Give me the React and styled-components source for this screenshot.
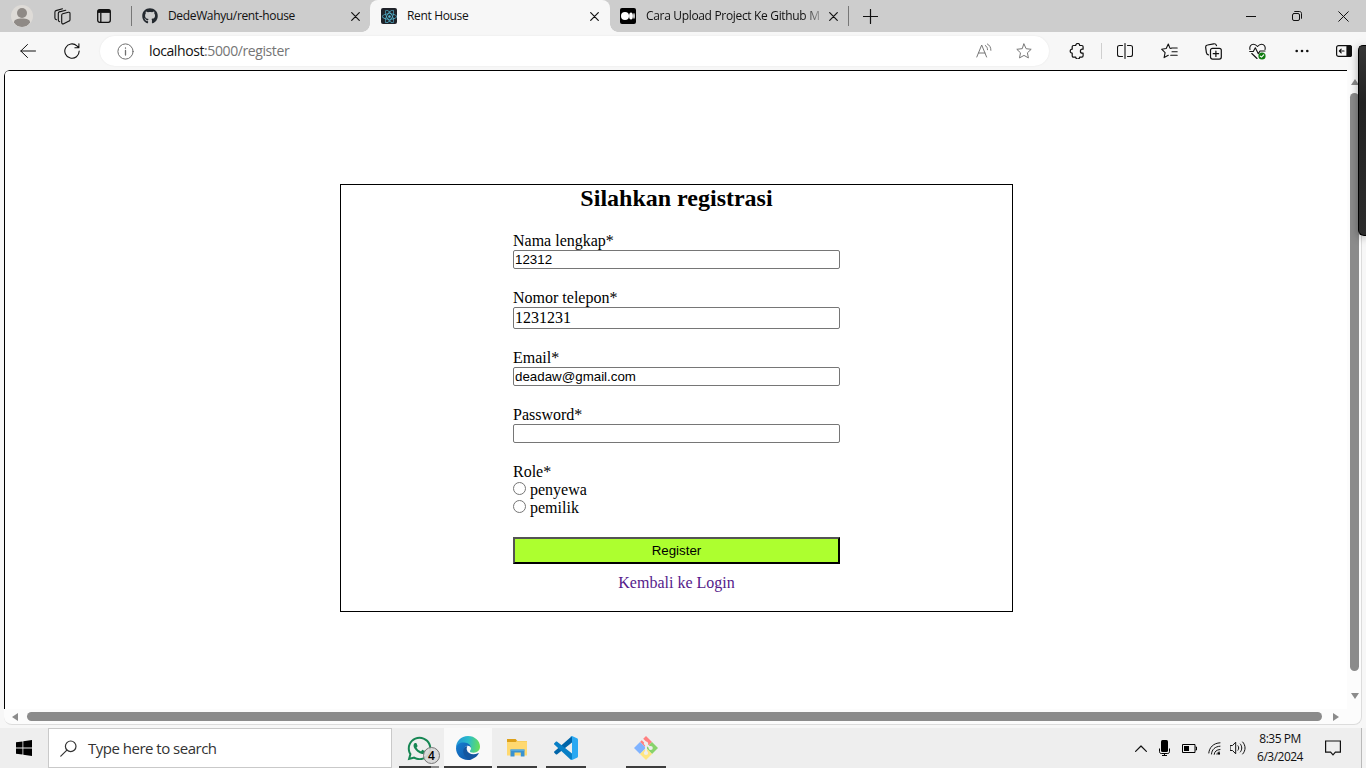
import React from "react";
import styled, { createGlobalStyle, css } from "styled-components";
import { FaGithub, FaReact, FaWhatsapp } from "react-icons/fa";

const GlobalStyle = createGlobalStyle`
  *, *::before, *::after { box-sizing: border-box; }
  html, body { margin: 0; padding: 0; overflow: hidden; }
  svg { display: block; flex: none; }
`;

const ui = `"Open Sans", "Noto Sans", sans-serif`;

const Desktop = styled.div`
  position: relative;
  display: flex;
  flex-direction: column;
  width: 1366px;
  height: 768px;
  overflow: hidden;
  background: #f7f7f7;
  font-family: ${ui};
  color: #111;
`;

/* Tab strip */
const TabStrip = styled.header`
  display: flex;
  align-items: center;
  height: 32px;
  background: #cdcdcd;
`;

const Cell = styled.div`
  display: flex;
  align-items: center;
  justify-content: center;
  flex: none;
  width: ${(p) => p.$w}px;
  height: 100%;
  color: ${(p) => p.$color || "#111"};
`;

const Avatar = styled.div`
  width: 22px;
  height: 22px;
  border-radius: 50%;
  overflow: hidden;
  background: #dedbd7;
`;

const Rule = styled.span`
  flex: none;
  width: 1px;
  height: ${(p) => p.$h}px;
  background: ${(p) => p.$color};
`;

const Tab = styled.div`
  position: relative;
  display: flex;
  align-items: center;
  flex: none;
  width: ${(p) => p.$w}px;
  height: 32px;
  padding: 0 ${(p) => p.$end}px 0 ${(p) => p.$start}px;
  ${(p) =>
    p.$active &&
    css`
      background: #f7f7f7;
      border-radius: 8px 8px 0 0;
      &::before,
      &::after {
        content: "";
        position: absolute;
        bottom: 0;
        width: 8px;
        height: 8px;
      }
      &::before {
        left: -8px;
        background: radial-gradient(circle at 0 0, transparent 7.5px, #f7f7f7 8px);
      }
      &::after {
        right: -8px;
        background: radial-gradient(circle at 100% 0, transparent 7.5px, #f7f7f7 8px);
      }
    `}
`;

const Favicon = styled.span`
  display: flex;
  align-items: center;
  justify-content: center;
  flex: none;
  width: 16px;
  height: 16px;
  border-radius: 2px;
  background: ${(p) => p.$bg || "transparent"};
  color: ${(p) => p.$color || "#24292f"};
`;

const TabTitle = styled.span`
  flex: 1;
  min-width: 0;
  margin: 0 8px 0 10px;
  white-space: nowrap;
  font-size: 12px;
  line-height: 16px;
  letter-spacing: ${(p) => p.$track || 0}px;
  ${(p) =>
    p.$fade &&
    css`
      mask-image: linear-gradient(90deg, #000 158px, transparent 180px);
    `}
`;

const WindowButtons = styled.div`
  display: flex;
  height: 100%;
  margin-left: auto;
`;

/* Toolbar */
const Toolbar = styled.div`
  display: flex;
  align-items: center;
  height: 38px;
  padding-left: 6px;
  background: #f7f7f7;
`;

const AddressBar = styled.div`
  display: flex;
  align-items: center;
  width: 949px;
  height: 30px;
  margin: 0 6px;
  padding: 0 6px 0 17px;
  border-radius: 15px;
  background: #fff;
  box-shadow: 0 0 2px rgba(0, 0, 0, 0.08);
`;

const Address = styled.span`
  flex: 1;
  margin-left: 15px;
  color: #757575;
  font-size: 14px;
  line-height: 20px;
  letter-spacing: -0.4px;
  b { font-weight: 400; color: #111; }
`;

/* Page frame */
const Frame = styled.div`
  display: grid;
  grid-template-columns: 1343px 14px;
  grid-template-rows: 639px 15px;
  width: 1358px;
  height: 655px;
  margin: 0 4px 3px;
  border: solid #dcdcdc;
  border-width: 0 1px 1px 0;
  border-radius: 6px 0 8px 8px;
  background: #fcfcfc;
  overflow: hidden;
`;

const Viewport = styled.main`
  padding: 113px 0 0 335px;
  border: solid #000;
  border-width: 1px 0 0 1px;
  border-radius: 5px 0 0 0;
  background: #fff;
  font-family: "Liberation Serif", serif;
  font-size: 16px;
  color: #000;
`;

const Scroll = styled.div`
  display: flex;
  flex-direction: ${(p) => (p.$vertical ? "column" : "row")};
  align-items: center;
  justify-content: flex-start;
  padding: ${(p) => (p.$vertical ? "9px 0 0 1px" : "0 0 0 8px")};
  gap: ${(p) => (p.$vertical ? "8px" : "9px")};
`;

const Thumb = styled.div`
  flex: none;
  width: ${(p) => p.$w}px;
  height: ${(p) => p.$h}px;
  border-radius: 5px;
  background: #8b8b8b;
`;

const Arrow = styled.span`
  flex: none;
  width: 0;
  height: 0;
  border: solid transparent;
  ${(p) => p.$dir === "up" && "border-width: 0 4.5px 6px; border-bottom-color: #8b8b8b;"}
  ${(p) => p.$dir === "down" && "border-width: 6px 4.5px 0; border-top-color: #8b8b8b; margin-top: 14px;"}
  ${(p) => p.$dir === "left" && "border-width: 4.5px 6px 4.5px 0; border-right-color: #8b8b8b;"}
  ${(p) => p.$dir === "right" && "border-width: 4.5px 0 4.5px 6px; border-left-color: #8b8b8b; margin-left: 2px;"}
`;

/* Registration form */
const Card = styled.section`
  display: flex;
  flex-direction: column;
  align-items: center;
  width: 673px;
  height: 428px;
  border: 1px solid #000;
`;

const Title = styled.h2`
  margin: 0 0 20px;
  font-size: 24px;
  font-weight: 700;
  line-height: 27px;
`;

const Form = styled.form`
  display: flex;
  flex-direction: column;
  gap: 20px;
  width: 327px;
`;

const Field = styled.div`
  display: flex;
  flex-direction: column;
  line-height: 18px;
`;

const TextInput = styled.input`
  width: 100%;
  height: ${(p) => (p.$serif ? 22 : 19)}px;
  padding: 0 1px;
  border: 1px solid #767676;
  border-radius: 2px;
  outline: none;
  background: #fff;
  color: #000;
  font: ${(p) => (p.$serif ? '16px "Liberation Serif", serif' : '13.333px "Liberation Sans", sans-serif')};
`;

const Choice = styled.label`
  display: flex;
  align-items: flex-start;
  gap: 4px;
  height: 18px;
`;

const Radio = styled.input`
  appearance: none;
  width: 13px;
  height: 13px;
  margin: 1px 0 0;
  border: 1px solid #767676;
  border-radius: 50%;
  background: #fff;
`;

const Submit = styled.button`
  height: 27px;
  padding: 0;
  border: 2px outset #000;
  border-radius: 0;
  background: #adff2f;
  color: #000;
  font: 13.333px "Liberation Sans", sans-serif;
`;

const LoginLink = styled.a`
  margin-top: 10px;
  color: #551a8b;
  line-height: 18px;
`;

/* Taskbar */
const Taskbar = styled.footer`
  display: flex;
  height: 40px;
  background: #eeeeee;
`;

const Search = styled.div`
  display: flex;
  align-items: center;
  width: 344px;
  height: 40px;
  margin-right: 3px;
  padding-left: 11px;
  border: 1px solid #c9c9c9;
  background: #fff;
  color: #333;
  font-size: 15px;
  letter-spacing: -0.5px;
  span { margin-left: 11px; }
`;

const TaskButton = styled.div`
  display: flex;
  align-items: center;
  justify-content: center;
  position: relative;
  flex: none;
  width: 48px;
  height: 40px;
  margin-left: ${(p) => p.$gap ?? 1}px;
  background: ${(p) => (p.$active ? "#f9f9f9" : "transparent")};
  &::after {
    content: "";
    position: absolute;
    bottom: 0;
    left: ${(p) => (p.$active ? 0 : 4)}px;
    right: ${(p) => (p.$active ? 0 : 4)}px;
    height: 2px;
    background: ${(p) => (p.$stacked ? "linear-gradient(90deg, #3d3d3d 80%, #8a8a8a 80%)" : "#3d3d3d")};
  }
`;

const Badge = styled.span`
  position: absolute;
  left: 28px;
  top: 19px;
  display: flex;
  align-items: center;
  justify-content: center;
  width: 17px;
  height: 17px;
  border: 1px solid #777;
  border-radius: 50%;
  background: rgba(216, 216, 216, 0.93);
  color: #000;
  font: 600 12px/15px ${ui};
`;

const Tray = styled.div`
  display: flex;
  align-items: center;
  height: 40px;
  margin-left: auto;
`;

const Clock = styled.div`
  width: 62px;
  text-align: center;
  font-size: 12px;
  line-height: 18px;
  letter-spacing: -0.5px;
  white-space: nowrap;
`;

const ShowDesktop = styled.div`
  width: 5px;
  height: 40px;
  border-left: 1px solid #b9b9b9;
  background: #f3f3f3;
`;

const DarkWindow = styled.div`
  position: absolute;
  top: 45px;
  right: 0;
  width: 8px;
  height: 191px;
  border: solid #000;
  border-width: 1px 0 1px 1px;
  border-radius: 5px 0 0 6px;
  background: linear-gradient(#363636, #222 30%, #2c2c2c);
  box-shadow: 0 2px 9px rgba(0, 0, 0, 0.35);
`;

const Line = ({ w = 16, h = w, sw = 1, box, children, ...rest }) => (
  <svg
    width={w}
    height={h}
    viewBox={box || `0 0 ${w} ${h}`}
    fill="none"
    stroke="currentColor"
    strokeWidth={sw}
    strokeLinecap="round"
    strokeLinejoin="round"
    {...rest}
  >
    {children}
  </svg>
);

const CloseIcon = ({ size = 9, sw = 1.2 }) => (
  <Line w={size} sw={sw}>
    <path d={`M.7 .7L${size - 0.7} ${size - 0.7}M${size - 0.7} .7L.7 ${size - 0.7}`} />
  </Line>
);

const starPath = "M8 1l2.1 4.7 5.1.6-3.8 3.5 1 5.1L8 12.4l-4.5 2.5 1-5.1L.8 6.3l5.1-.6z";

const EdgeLogo = () => (
  <svg width="24" height="24" viewBox="0 0 24 24">
    <defs>
      <linearGradient id="edgeTop" x1="0" y1=".4" x2="1" y2=".5">
        <stop offset="0" stopColor="#2394d8" />
        <stop offset=".5" stopColor="#2bbdca" />
        <stop offset="1" stopColor="#67df58" />
      </linearGradient>
      <linearGradient id="edgeSide" x1="0" y1="0" x2="1" y2="1">
        <stop offset="0" stopColor="#167fd2" />
        <stop offset="1" stopColor="#1051a1" />
      </linearGradient>
    </defs>
    <path d="M0 12C0 5 5 0 12 0s12 5 12 10.6c0 4-3 6.1-6.3 6.1-3 0-4.2-1-3.7-2 .9-1 1.2-2 .9-3C14 8.8 10.500 8 7.800 8 4 8 1 9.500 0 12z" fill="url(#edgeTop)" />
    <path d="M0 12c.8-4 4.200-5.800 8-5.600 4.300.2 6.800 2.700 7 5.300-.7-1.500-2-2.200-3.600-2-2.800.5-3.700 3.400-2.700 6.300 1.200 3.600 4.200 5.800 8 6.700C14.500 24 13.500 24 12 24 5 24 0 19 0 12z" fill="url(#edgeSide)" />
    <path d="M9.200 10.700C6.500 13 6.700 18.200 9.800 21c2.100 1.900 4.700 2.200 6.900 1.700 2.600-1 4.700-2.700 5.900-4.900.3-.6-.1-.9-.6-.6-4.600 2.400-10.200.8-11.200-3.400-.3-1.200 0-2.500.7-3.500-.8 0-1.600 0-2.300.4z" fill="#14569f" />
  </svg>
);

const FolderLogo = () => (
  <svg width="22" height="20" viewBox="0 0 22 20">
    <path d="M1 1h8.500l2 2H21v14H1z" fill="#f8cf60" />
    <path d="M1 1h8.500l1.300 1.500-1 1.500H1z" fill="#dda019" />
    <path d="M1 4h20v13.500H1z" fill="#ffd970" />
    <path d="M4.500 18.500v-7h14v7h-3.700v-4H8.500v4z" fill="#3992d0" />
    <path d="M4.500 11.500h14v1.300h-14z" fill="#5bb0e5" />
  </svg>
);

const CodeLogo = () => (
  <svg width="24" height="24" viewBox="0 0 24 24">
    <path d="M18 0v6.400L3.200 18.200c-.5.4-1 .3-1.400 0L.3 16.800c-.4-.4-.4-1 0-1.400z" fill="#0065a9" />
    <path d="M18 24v-6.400L3.200 5.800c-.5-.4-1-.3-1.400 0L.3 7.200c-.4.4-.4 1 0 1.400L16.500 23.500z" fill="#087fc6" />
    <path d="M18 0l5 2.300c.6.3 1 .8 1 1.500v16.400c0 .7-.4 1.200-1 1.500L18 24c-.8.2-1.500-.2-2-.7.800.5 2 .2 2-1V1.700c0-1.200-1.200-1.500-2-1 .5-.5 1.200-.9 2-.7z" fill="#2aa8f2" />
  </svg>
);

const GitLogo = () => (
  <svg width="24" height="24" viewBox="0 0 24 24">
    <path d="M12 0l6 6-6 6-6-6z" fill="#ff8080" />
    <path d="M18 6l6 6-6 6-6-6z" fill="#88d36b" />
    <path d="M6 6l6 6-6 6-6-6z" fill="#80b3ff" />
    <path d="M12 12l6 6-6 6-6-6z" fill="#ffe680" />
    <path d="M8 3l4 4v10M12 8l4.500 4" stroke="#eee" strokeWidth="1.900" fill="none" />
    <circle cx="12" cy="7.500" r="2.100" fill="#eee" />
    <circle cx="12" cy="17" r="2.100" fill="#eee" />
    <circle cx="16.700" cy="12" r="2.100" fill="#eee" />
  </svg>
);

const Tabs = () => (
  <TabStrip>
    <Cell $w={44}>
      <Avatar>
        <svg width="22" height="22" viewBox="0 0 22 22" fill="#8f8a86">
          <circle cx="11" cy="8" r="5" />
          <path d="M3 17.500c0-3 3-4 8-4s8 1 8 4C17.200 20.500 14 22 11 22s-6.200-1.500-8-4.500z" />
        </svg>
      </Avatar>
    </Cell>
    <Cell $w={36}>
      <Line w={17} h={17} sw={1.1}>
        <path d="M8.700 5.800l5.600-1.500c1.100-.3 1.700.2 1.700 1.100v6.300c0 .7-.3 1.200-1 1.400l-5.300 2.600c-1.200.5-2 0-2-1.100V7.200c0-.8.300-1.200 1-1.400z" />
        <path d="M5.700 13.700C4.800 13.500 4.300 13 4.300 12V5.400c0-.8.300-1.300 1-1.500l6.500-1.700M2.500 11.800C1.300 11.500.9 11 .9 10V4.200c0-.8.4-1.400 1.100-1.600L8.500.8" />
      </Line>
    </Cell>
    <Cell $w={48}>
      <Line w={14} sw={1.3}>
        <rect x=".7" y=".7" width="12.600" height="12.600" rx="2" />
        <path d="M.8 2.300h12.400" strokeWidth="3.200" strokeLinecap="butt" />
        <path d="M3.800 4v9" />
      </Line>
    </Cell>
    <Cell $w={7}><Rule $h={20} $color="#777" /></Cell>
    <Tab $w={235} $start={7} $end={10}>
      <Favicon><FaGithub size={16} /></Favicon>
      <TabTitle $track={-0.35}>DedeWahyu/rent-house</TabTitle>
      <CloseIcon />
    </Tab>
    <Tab $w={240} $start={11} $end={11} $active>
      <Favicon $bg="#20232a" $color="#55b8d2"><FaReact size={15} /></Favicon>
      <TabTitle $track={-0.35}>Rent House</TabTitle>
      <CloseIcon />
    </Tab>
    <Tab $w={238} $start={10} $end={10}>
      <Favicon $bg="#000">
        <svg width="16" height="16" viewBox="0 0 16 16" fill="#fff">
          <circle cx="5" cy="8" r="4" />
          <ellipse cx="11" cy="8" rx="1.900" ry="3.500" />
          <ellipse cx="14" cy="8" rx=".8" ry="3" />
        </svg>
      </Favicon>
      <TabTitle $track={-0.33} $fade>Cara Upload Project Ke Github M</TabTitle>
      <CloseIcon />
    </Tab>
    <Rule $h={20} $color="#777" />
    <Cell $w={43}>
      <Line w={15} sw={1.2}><path d="M7.500 .5v14M.5 7.500h14" /></Line>
    </Cell>
    <WindowButtons>
      <Cell $w={46}><Line w={10}><path d="M0 5.500h10" /></Line></Cell>
      <Cell $w={46}>
        <Line w={10}>
          <rect x=".5" y="2.500" width="7" height="7" rx="1.500" />
          <path d="M2.700 .5H7.500c1.200 0 2 .8 2 2v4.800" />
        </Line>
      </Cell>
      <Cell $w={46}><CloseIcon size={11} sw={1} /></Cell>
    </WindowButtons>
  </TabStrip>
);

const Navigation = () => (
  <Toolbar>
    <Cell $w={44}>
      <Line w={16}><path d="M7.500 1.500L.8 8l6.700 6.500M.8 8h14.700" /></Line>
    </Cell>
    <Cell $w={44}>
      <Line w={16} sw={1.100}><path d="M15.200 8A7.200 7.200 0 1 1 12.900 2.800l1.800 1.900M14.900 .8v4h-4" /></Line>
    </Cell>
    <AddressBar>
      <Line w={17} color="#6f6f6f">
        <circle cx="8.500" cy="8.500" r="7.600" />
        <path d="M8.500 7.500v4.500M8.500 5v.2" strokeWidth="1.300" />
      </Line>
      <Address><b>localhost</b>:5000/register</Address>
      <Cell $w={40} $color="#777">
        <Line w={16} h={16}>
          <path d="M.8 14L5.700 2l4.900 12M2.500 10h6.500M9.300 2.500c1.600 1 2.200 2.400 2.200 4.200M11.400 1c2.300 1.300 3.500 3.300 3.500 6.300" />
        </Line>
      </Cell>
      <Cell $w={39} $color="#777"><Line w={16}><path d={starPath} /></Line></Cell>
    </AddressBar>
    <Cell $w={44}>
      <Line w={16} sw={1.200}>
        <path d="M4.500 2.500h2.200a2 2 0 0 1 4 0h2.100c.8 0 1.300.5 1.300 1.300v2.400h-.7a2 2 0 0 0 0 4h.7v2.600c0 .8-.5 1.300-1.300 1.300h-2.100a2 2 0 0 1-4 0H4.500c-.8 0-1.300-.5-1.300-1.300v-2.600a2 2 0 0 1 0-4V3.800c0-.8.5-1.300 1.300-1.300z" />
      </Line>
    </Cell>
    <Cell $w={5}><Rule $h={16} $color="#cfcfcf" /></Cell>
    <Cell $w={42}>
      <Line w={16} sw={1.100}>
        <path d="M5.500 2.500h-3c-1.200 0-2 .8-2 2v7c0 1.200.8 2 2 2h3M10.500 2.500h3c1.200 0 2 .8 2 2v7c0 1.200-.8 2-2 2h-3M8 .5v15" />
      </Line>
    </Cell>
    <Cell $w={47}>
      <Line w={17} h={16} sw={1.100}>
        <path d="M10 5.500L8.800 4.900 7.300 1 5.200 5.500.6 6.200l3.500 3.400-1 5 4.200-2.300M10.500 5h5.700M11 8.700h5.200M9.700 12.300h6.500" />
      </Line>
    </Cell>
    <Cell $w={41}>
      <Line w={17} sw={1.200}>
        <rect x="5.500" y="5.300" width="10.800" height="10.800" rx="2" />
        <path d="M10.900 8v5.400M8.200 10.700h5.400M3.500 11.800C2 11.700 1.600 10.600 1.400 9.600L.7 4.600C.5 3.200 1.300 2.200 2.500 2L8.700.8c1.500-.2 2.400.4 2.800 1.900" />
      </Line>
    </Cell>
    <Cell $w={47}>
      <Line w={17} sw={1.100}>
        <path d="M1 6.500C.2 3.500 2 1.200 4.400 1.200c1.600 0 2.900.8 4.100 2.300C9.700 2 11 1.200 12.600 1.200 15 1.200 16.800 3.500 16 6.500M.7 8.500h3.600l2-3.700 3 6 1.700-2.800h5M2.800 10.500L8 15.500" />
        <circle cx="13" cy="13" r="3.600" fill="#107c10" stroke="none" />
        <path d="M11.300 13.200l1.200 1 2.200-2.400" stroke="#fff" />
      </Line>
    </Cell>
    <Cell $w={42}>
      <svg width="14" height="4" viewBox="0 0 14 4" fill="#111">
        <circle cx="1.700" cy="2" r="1.300" /><circle cx="7" cy="2" r="1.300" /><circle cx="12.300" cy="2" r="1.300" />
      </svg>
    </Cell>
    <Cell $w={42}>
      <Line w={16} h={12} sw={1.200}>
        <rect x=".6" y=".6" width="14.800" height="10.800" rx="2" />
        <path d="M11 .6h2.500c1 0 1.900.8 1.900 1.900v7c0 1-.8 1.900-1.900 1.900H11z" fill="currentColor" />
        <path d="M8 6H3.500M5.200 4.200L3.400 6l1.800 1.800" />
      </Line>
    </Cell>
  </Toolbar>
);

const fields = [
  { label: "Nama lengkap*", value: "12312" },
  { label: "Nomor telepon*", value: "1231231", serif: true },
  { label: "Email*", value: "deadaw@gmail.com" },
  { label: "Password*", value: "", type: "password" },
];

const Registration = () => (
  <Card>
    <Title>Silahkan registrasi</Title>
    <Form>
      {fields.map((f) => (
        <Field key={f.label}>
          <label>{f.label}</label>
          <TextInput type={f.type || "text"} defaultValue={f.value} $serif={f.serif} />
        </Field>
      ))}
      <Field>
        <span>Role*</span>
        <Choice><Radio type="radio" name="role" />penyewa</Choice>
        <Choice><Radio type="radio" name="role" />pemilik</Choice>
      </Field>
      <Submit type="button">Register</Submit>
    </Form>
    <LoginLink>Kembali ke Login</LoginLink>
  </Card>
);

const BottomBar = () => (
  <Taskbar>
    <Cell $w={48}>
      <svg width="16" height="16" viewBox="0 0 16 16" fill="#000">
        <path d="M0 2.300L6.500 1.400v6.200H0zM7.300 1.300L16 0v7.600H7.300zM0 8.400h6.500v6.200L0 13.700zM7.300 8.400H16V16l-8.700-1.300z" />
      </svg>
    </Cell>
    <Search>
      <Line w={17} sw={1.200}><circle cx="10.700" cy="6.300" r="5.300" /><path d="M6.900 10.100L.8 16.200" /></Line>
      <span>Type here to search</span>
    </Search>
    <TaskButton $gap={0} $stacked>
      <FaWhatsapp size={27} color="#168653" />
      <Badge>4</Badge>
    </TaskButton>
    <TaskButton $active><EdgeLogo /></TaskButton>
    <TaskButton><FolderLogo /></TaskButton>
    <TaskButton><CodeLogo /></TaskButton>
    <TaskButton $gap={32}><GitLogo /></TaskButton>
    <Tray>
      <Cell $w={24}><Line w={12} h={7} sw={1.200}><path d="M.6 6.400L6 1l5.400 5.400" /></Line></Cell>
      <Cell $w={23}>
        <svg width="11" height="16" viewBox="0 0 11 16">
          <rect x="2" width="7" height="12" rx="1.500" fill="#000" />
          <path d="M.5 8.500v3.200c0 1 .7 1.800 1.800 1.800h6.400c1.100 0 1.800-.8 1.800-1.800V8.500M5.500 13v2M3 15.500h5" fill="none" stroke="#000" />
        </svg>
      </Cell>
      <Cell $w={27}>
        <svg width="15" height="9" viewBox="0 0 15 9">
          <path d="M.5 .5h12.500v8H.5zM13.500 3h1v3h-1" fill="none" stroke="#000" />
          <path d="M2 2h5v5H2z" fill="#000" />
        </svg>
      </Cell>
      <Cell $w={23}>
        <Line w={13}>
          <path d="M.8 11C1.200 5.500 5.500 1 12 .8M3.500 12C3.800 7.500 7 4.500 12 4.200M6.200 12.300C6.500 9.500 8.500 7.800 12 7.500" />
          <path d="M9 12.300c0-1.500 1-2.200 2.500-2.200" />
          <circle cx="11" cy="11.700" r="1.100" fill="#000" stroke="none" />
        </Line>
      </Cell>
      <Cell $w={23}>
        <Line w={16} h={14}>
          <path d="M.5 4.500h2L5.700 1.200v11.600L2.500 9.500h-2zM8 4.800c1 1.200 1 3.200 0 4.400M10.300 3c2 2.200 2 5.800 0 8M12.700 1c3.200 3.500 3.200 8.500 0 12" />
        </Line>
      </Cell>
      <Clock>8:35 PM<br />6/3/2024</Clock>
      <Cell $w={43}>
        <Line w={16} h={16} sw={1.200}><path d="M.6 1h14.800v11.200h-5L8 14.800l-2.400-2.600h-5z" strokeLinejoin="miter" /></Line>
      </Cell>
      <Cell $w={7} />
      <ShowDesktop />
    </Tray>
  </Taskbar>
);

export default function App() {
  return (
    <>
      <GlobalStyle />
      <Desktop>
        <Tabs />
        <Navigation />
        <Frame>
          <Viewport><Registration /></Viewport>
          <Scroll $vertical>
            <Arrow $dir="up" />
            <Thumb $w={9} $h={578} />
            <Arrow $dir="down" />
          </Scroll>
          <Scroll>
            <Arrow $dir="left" />
            <Thumb $w={1295} $h={9} />
            <Arrow $dir="right" />
          </Scroll>
        </Frame>
        <BottomBar />
        <DarkWindow />
      </Desktop>
    </>
  );
}
